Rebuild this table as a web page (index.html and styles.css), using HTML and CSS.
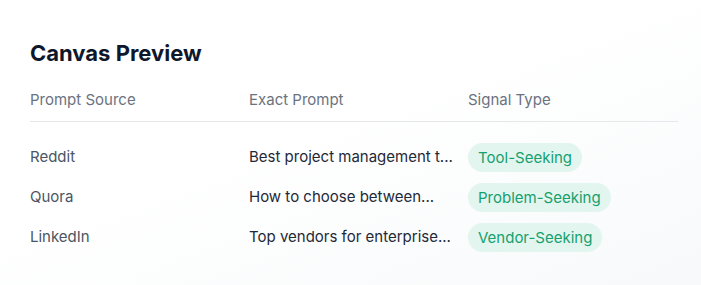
FILE: index.html
```html
<!DOCTYPE html>
<html>
<head>
<meta charset="utf-8">
<link rel="stylesheet" href="styles.css">
</head>
<body>
<main class="page">
  <h1 class="title">Canvas Preview</h1>
  <div class="table">
    <div class="row head">
      <div class="cell">Prompt Source</div>
      <div class="cell">Exact Prompt</div>
      <div class="cell">Signal Type</div>
    </div>
    <div class="body">
      <div class="row">
        <div class="cell source">Reddit</div>
        <div class="cell prompt">Best project management t...</div>
        <div class="cell"><span class="badge">Tool-Seeking</span></div>
      </div>
      <div class="row">
        <div class="cell source">Quora</div>
        <div class="cell prompt">How to choose between...</div>
        <div class="cell"><span class="badge">Problem-Seeking</span></div>
      </div>
      <div class="row">
        <div class="cell source">LinkedIn</div>
        <div class="cell prompt">Top vendors for enterprise...</div>
        <div class="cell"><span class="badge">Vendor-Seeking</span></div>
      </div>
    </div>
  </div>
</main>
</body>
</html>
```

FILE: styles.css
```css
* { box-sizing: border-box; }
html, body {
  margin: 0;
  height: 100%;
}
body {
  font-family: Inter, "Noto Sans", sans-serif;
  background: linear-gradient(160deg, #ffffff 0%, #ffffff 45%, #f7f9fa 100%);
  color: #1f2937;
}
.page {
  padding: 38px 23px 0 30px;
}
.title {
  margin: 0;
  font-size: 22px;
  line-height: 30px;
  font-weight: 700;
  color: #0f172a;
}
.table {
  margin-top: 22px;
  font-size: 15px;
  line-height: 20px;
}
.row {
  display: grid;
  grid-template-columns: 219px 219px 1fr;
  align-items: center;
}
.head {
  color: #6b7280;
  padding-bottom: 11px;
  border-bottom: 1px solid #e5e7eb;
}
.body {
  padding-top: 15px;
}
.body .row {
  height: 40px;
}
.cell {
  padding-right: 14px;
  white-space: nowrap;
  overflow: hidden;
  text-overflow: ellipsis;
}
.source { color: #4b5563; }
.prompt { color: #1f2937; }
.badge {
  display: inline-block;
  padding: 4px 10px;
  line-height: 21px;
  border-radius: 999px;
  background: #e2f5ee;
  color: #16a06e;
}
```
